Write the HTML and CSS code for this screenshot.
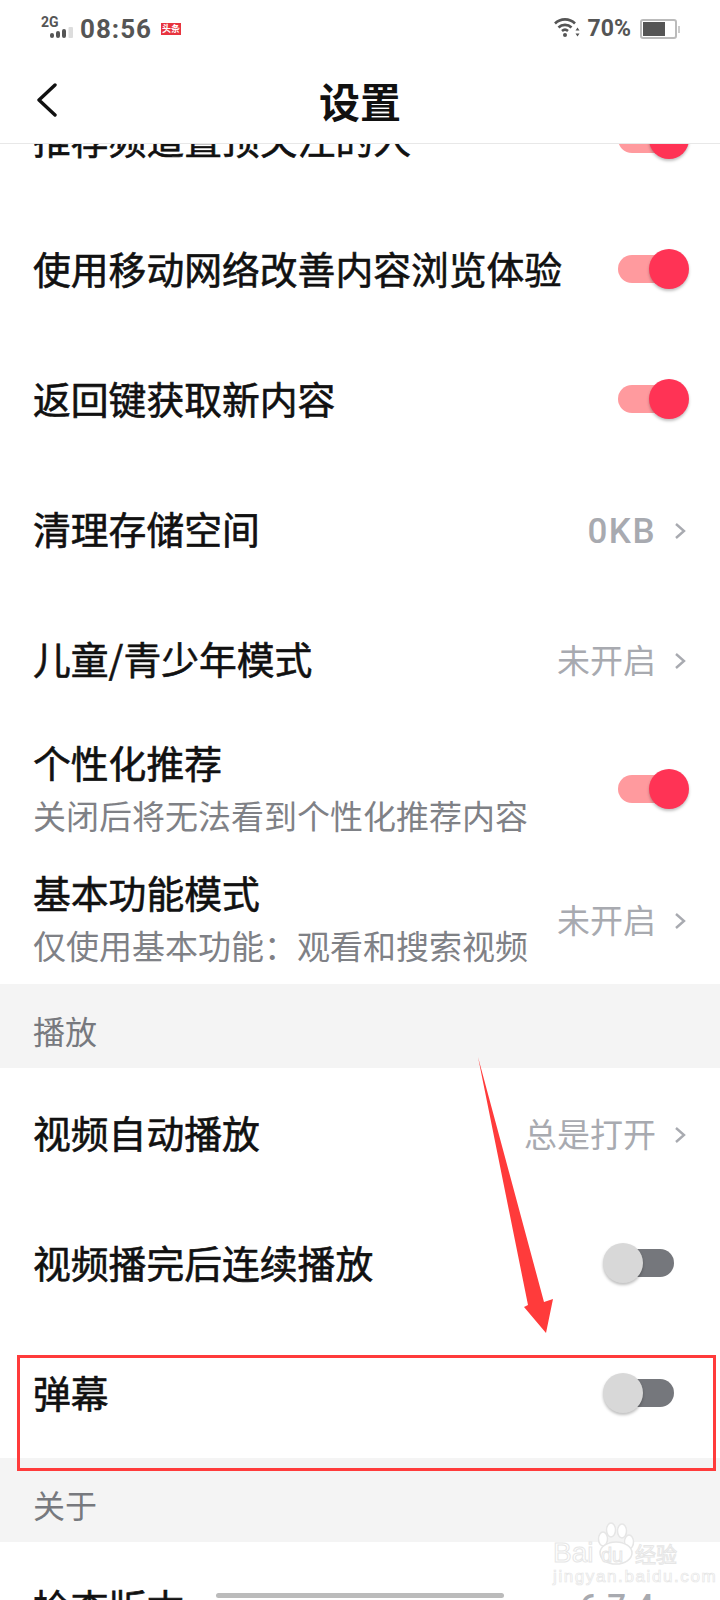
FILE: index.html
```html
<!DOCTYPE html>
<html lang="zh-CN">
<head>
    <meta charset="UTF-8">
    <meta name="viewport" content="width=device-width, initial-scale=1">
    <title>设置</title>
    <link rel="stylesheet" href="styles.css">
</head>
<body>
    <div class="phone">
        <div class="status-bar">
            <div class="status-left">
                <div class="signal">
                    <span class="net">2G</span>
                    <svg class="bars" width="23" height="11" viewBox="0 0 23 11">
                        <rect x="0" y="6" width="4" height="5" rx="2" fill="#555"/>
                        <rect x="6" y="4" width="4" height="7" rx="2" fill="#555"/>
                        <rect x="12" y="2" width="4" height="9" rx="2" fill="#555"/>
                        <rect x="18.500" y="0" width="4.500" height="11" rx="1" fill="#ddd"/>
                    </svg>
                </div>
                <span class="clock">08:56</span>
                <span class="app-badge">头条</span>
            </div>
            <div class="status-right">
                <svg class="wifi" width="26" height="22" viewBox="0 0 26 22">
                    <path d="M1 7.500C6.500 2 15.500 2 21 7.500M4.500 11.500C8 8 14 8 17.500 11.500M8 15C9.800 13.400 12.200 13.400 14 15" fill="none" stroke="#555" stroke-width="2.600"/>
                    <circle cx="11" cy="19" r="2" fill="#555"/>
                    <path d="M23.500 11.500l2 3h-4zM23.500 20.500l2-3h-4z" fill="#555"/>
                </svg>
                <span class="battery-text">70%</span>
                <div class="battery">
                    <div class="battery-level"></div>
                </div>
                <div class="battery-tip"></div>
            </div>
        </div>

        <div class="title-bar">
            <svg class="back" width="22" height="34" viewBox="0 0 22 34">
                <path d="M19 2L3 17L19 32" fill="none" stroke="#111" stroke-width="3.400" stroke-linecap="round" stroke-linejoin="round"/>
            </svg>
            <h1>设置</h1>
        </div>

        <div class="list-window">
            <div class="list">
                <div class="row">
                    <span class="row-title">推荐频道置顶关注的人</span>
                    <span class="switch on"><i></i></span>
                </div>
                <div class="row">
                    <span class="row-title">使用移动网络改善内容浏览体验</span>
                    <span class="switch on"><i></i></span>
                </div>
                <div class="row">
                    <span class="row-title">返回键获取新内容</span>
                    <span class="switch on"><i></i></span>
                </div>
                <div class="row">
                    <span class="row-title">清理存储空间</span>
                    <span class="row-value"><span class="latin">0KB</span><svg class="chevron" width="12" height="18" viewBox="0 0 12 18"><path d="M2 2l8 7-8 7" fill="none" stroke="#a8aab0" stroke-width="2.400"/></svg></span>
                </div>
                <div class="row">
                    <span class="row-title">儿童/青少年模式</span>
                    <span class="row-value">未开启<svg class="chevron" width="12" height="18" viewBox="0 0 12 18"><path d="M2 2l8 7-8 7" fill="none" stroke="#a8aab0" stroke-width="2.400"/></svg></span>
                </div>
                <div class="row">
                    <div>
                        <div class="row-title">个性化推荐</div>
                        <div class="row-sub">关闭后将无法看到个性化推荐内容</div>
                    </div>
                    <span class="switch on"><i></i></span>
                </div>
                <div class="row">
                    <div>
                        <div class="row-title">基本功能模式</div>
                        <div class="row-sub">仅使用基本功能：观看和搜索视频</div>
                    </div>
                    <span class="row-value">未开启<svg class="chevron" width="12" height="18" viewBox="0 0 12 18"><path d="M2 2l8 7-8 7" fill="none" stroke="#a8aab0" stroke-width="2.400"/></svg></span>
                </div>
                <div class="section">播放</div>
                <div class="row">
                    <span class="row-title">视频自动播放</span>
                    <span class="row-value">总是打开<svg class="chevron" width="12" height="18" viewBox="0 0 12 18"><path d="M2 2l8 7-8 7" fill="none" stroke="#a8aab0" stroke-width="2.400"/></svg></span>
                </div>
                <div class="row">
                    <span class="row-title">视频播完后连续播放</span>
                    <span class="switch"><i></i></span>
                </div>
                <div class="row">
                    <span class="row-title">弹幕</span>
                    <span class="switch"><i></i></span>
                </div>
                <div class="section">关于</div>
                <div class="row">
                    <span class="row-title">检查版本</span>
                    <span class="row-value version"><span class="latin">6.7.4</span></span>
                </div>
            </div>
        </div>

        <!-- screenshot annotations -->
        <svg class="arrow" width="720" height="1600" viewBox="0 0 720 1600">
            <polygon points="478,1057 544,1302 553,1299 546,1333 524,1307 528,1305" fill="#ff3b3b"/>
        </svg>
        <div class="mark-box"></div>

        <div class="watermark">
            <svg class="paw" width="42" height="44" viewBox="0 0 42 44">
                <g fill="#fff" stroke="#e6e6e6" stroke-width="1.500">
                    <ellipse cx="7" cy="17" rx="4.500" ry="7"/>
                    <ellipse cx="15" cy="8" rx="4.500" ry="7"/>
                    <ellipse cx="26" cy="9" rx="4.500" ry="7"/>
                    <ellipse cx="33" cy="20" rx="4.500" ry="7"/>
                    <ellipse cx="20" cy="31" rx="16" ry="11"/>
                </g>
            </svg>
            <div class="mark-main"><span class="mark-bai">Bai</span><span class="mark-du">du</span><span class="mark-cn">经验</span></div>
            <div class="mark-url">jingyan.baidu.com</div>
        </div>

        <div class="home-bar"></div>
    </div>
</body>
</html>
```

FILE: styles.css
```css
* {
    box-sizing: border-box;
}
html, body {
    margin: 0;
    padding: 0;
}
body {
    font-family: "Noto Sans CJK SC", "Noto Sans", sans-serif;
    background: #fff;
}
.phone {
    position: relative;
    width: 720px;
    height: 1600px;
    overflow: hidden;
    background: #fff;
}

/* status bar */
.status-bar {
    height: 56px;
    padding: 2px 40px 0 41px;
    display: flex;
    justify-content: space-between;
    align-items: center;
    color: #555;
}
.status-left, .status-right {
    display: flex;
    align-items: center;
}
.signal {
    width: 39px;
    height: 24px;
    position: relative;
}
.net {
    position: absolute;
    left: 0;
    top: -2px;
    font-family: Roboto, sans-serif;
    font-size: 14px;
    font-weight: 700;
    line-height: 14px;
}
.bars {
    position: absolute;
    left: 9px;
    top: 10px;
}
.clock {
    font-family: Roboto, sans-serif;
    font-size: 26px;
    font-weight: 700;
    letter-spacing: 1px;
    line-height: 30px;
}
.app-badge {
    margin: 0 0 0 9px;
    width: 20px;
    height: 12px;
    background: #e8343f;
    color: #fff;
    font-size: 9px;
    font-weight: 700;
    line-height: 12px;
    text-align: center;
    white-space: nowrap;
}
.wifi {
    margin: 0 8px 4px 0;
}
.battery-text {
    font-family: Roboto, sans-serif;
    font-size: 23px;
    font-weight: 700;
    line-height: 30px;
    margin-right: 9px;
}
.battery {
    width: 37px;
    height: 20px;
    border: 2px solid #bbb;
    border-radius: 3px;
    padding: 1px;
    background: #fff;
}
.battery-level {
    width: 22px;
    height: 14px;
    background: #555;
}
.battery-tip {
    width: 2px;
    height: 7px;
    margin-left: 1px;
    background: #ccc;
}

/* title */
.title-bar {
    height: 88px;
    position: relative;
    display: flex;
    align-items: center;
    justify-content: center;
    border-bottom: 1px solid #e8e8e8;
    background: #fff;
}
.title-bar h1 {
    margin: 0;
    font-size: 41px;
    font-weight: 700;
    line-height: 56px;
    color: #111;
}
.back {
    position: absolute;
    left: 36px;
    top: 27px;
}

/* list */
.list-window {
    height: 1456px;
    overflow: hidden;
}
.list {
    margin-top: -70px;
}
.row {
    height: 130px;
    padding: 0 33px;
    display: flex;
    justify-content: space-between;
    align-items: center;
    background: #fff;
}
.row-title {
    font-size: 37.800px;
    font-weight: 400;
    -webkit-text-stroke: 0.600px #111;
    line-height: 50px;
    margin-bottom: 2px;
    color: #111;
}
.row-sub {
    font-size: 33px;
    line-height: 52px;
    color: #7f8186;
    white-space: nowrap;
}
.row-value {
    display: flex;
    align-items: center;
    font-size: 33px;
    line-height: 44px;
    color: #a8aab0;
    margin-right: 1px;
}
.latin {
    font-family: Roboto, sans-serif;
    font-size: 35px;
    font-weight: 500;
    letter-spacing: 1.500px;
    padding-top: 5px;
}
.version {
    margin-right: 33px;
}
.version .latin {
    font-size: 33px;
    letter-spacing: 0;
    padding-top: 0;
}
.chevron {
    margin: 3px 0 0 18px;
}
.section {
    height: 84px;
    padding: 9px 33px 0;
    font-size: 32px;
    line-height: 75px;
    color: #77797e;
    background: #f4f4f4;
}

/* toggles */
.switch {
    position: relative;
    display: block;
    width: 56px;
    height: 28px;
    margin-right: 13px;
    border-radius: 14px;
    background: #75777c;
}
.switch i {
    position: absolute;
    top: -6px;
    left: -15px;
    width: 40px;
    height: 40px;
    border-radius: 50%;
    background: #d8d8d8;
    box-shadow: 0 2px 3px rgba(0, 0, 0, 0.25);
}
.switch.on {
    background: #ff9a9e;
}
.switch.on i {
    left: 31px;
    background: #ff3355;
}

/* annotations drawn on the screenshot */
.arrow {
    position: absolute;
    left: 0;
    top: 0;
    pointer-events: none;
}
.mark-box {
    position: absolute;
    left: 17px;
    top: 1355px;
    width: 699px;
    height: 116px;
    border: 3px solid #ff3b3b;
}
.watermark {
    position: absolute;
    left: 553px;
    top: 1520px;
    width: 130px;
    height: 66px;
    font-family: "Liberation Sans", sans-serif;
}
.paw {
    position: absolute;
    left: 43px;
    top: 2px;
}
.mark-main {
    position: absolute;
    left: 0;
    top: 17px;
    display: flex;
    align-items: center;
    height: 32px;
    white-space: nowrap;
    color: #fff;
    -webkit-text-stroke: 1px #e6e6e6;
}
.mark-bai {
    width: 48px;
    font-size: 28px;
}
.mark-du {
    width: 34px;
    font-size: 20px;
    padding-top: 4px;
}
.mark-cn {
    font-family: "Noto Sans CJK SC", sans-serif;
    font-size: 21px;
}
.mark-url {
    position: absolute;
    left: 0;
    top: 48px;
    font-size: 17px;
    line-height: 18px;
    letter-spacing: 1.600px;
    white-space: nowrap;
    color: #fff;
    -webkit-text-stroke: 0.700px #e6e6e6;
}
.home-bar {
    position: absolute;
    left: 216px;
    top: 1593px;
    width: 288px;
    height: 5px;
    border-radius: 3px;
    background: #bbb;
}
```
